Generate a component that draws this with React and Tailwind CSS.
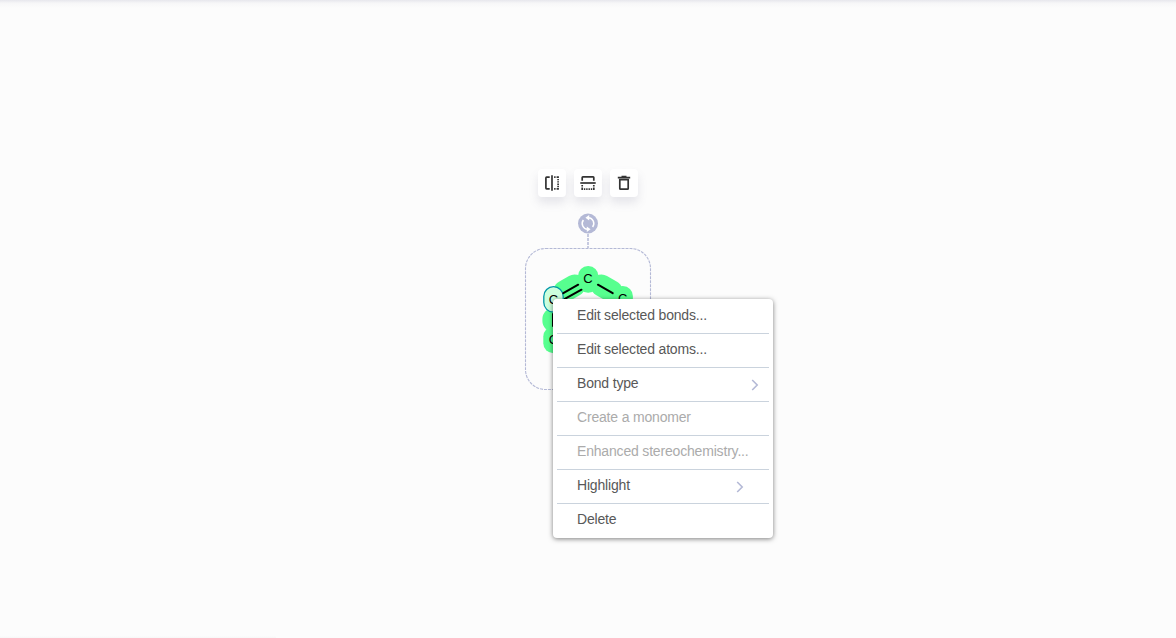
const MENU_ITEMS = [
  { label: 'Edit selected bonds...' },
  { label: 'Edit selected atoms...' },
  { label: 'Bond type', arrow: 'mr-[10px]' },
  { label: 'Create a monomer', disabled: true },
  { label: 'Enhanced stereochemistry...', disabled: true },
  { label: 'Highlight', arrow: 'mr-[25px]' },
  { label: 'Delete' },
];

function Chevron({ className }) {
  return (
    <svg className={className} width="8" height="12" viewBox="0 0 8 12" fill="none" stroke="#b4b9d6" strokeWidth="1.6">
      <path d="M1.2 1 L6.2 6 L1.2 11" />
    </svg>
  );
}

function FlipHorizontal() {
  return (
    <svg width="16" height="16" viewBox="0 0 16 16" fill="none" stroke="#333" strokeWidth="1.7">
      <path d="M5.7 2.2 H2.6 Q1.9 2.2 1.9 2.9 V13.1 Q1.9 13.8 2.6 13.8 H5.7" />
      <path d="M8 .3 V15.7" />
      <path d="M10.1 2.2 H11.6 M12.6 2.2 H14.9 M14.1 3.9 V5.3 M14.1 6.2 V7.6 M14.1 8.5 V9.9 M14.1 10.8 V12.2 M10.1 13.8 H11.6 M12.6 13.8 H14.9" />
    </svg>
  );
}

function FlipVertical() {
  return (
    <svg width="16" height="16" viewBox="0 0 16 16" fill="none" stroke="#333" strokeWidth="1.7">
      <path d="M2.2 5.7 V2.6 Q2.2 1.9 2.9 1.9 H13.1 Q13.8 1.9 13.8 2.6 V5.7" />
      <path d="M.3 8 H15.7" />
      <path d="M2.2 10.1 V11.6 M2.2 12.6 V14.9 M3.9 14.1 H5.3 M6.2 14.1 H7.6 M8.5 14.1 H9.9 M10.8 14.1 H12.2 M13.8 10.1 V11.6 M13.8 12.6 V14.9" />
    </svg>
  );
}

function Trash() {
  return (
    <svg width="16" height="16" viewBox="0 0 16 16" fill="none" stroke="#333" strokeWidth="1.7">
      <path d="M1.8 2.6 H14.2 M5.5 1.5 H10.5" />
      <path d="M3.8 4.7 H12.2 V13.5 Q12.2 14.2 11.5 14.2 H4.5 Q3.8 14.2 3.8 13.5 Z" />
    </svg>
  );
}

function ToolButton({ children }) {
  return (
    <button className="flex size-7 items-center justify-center rounded-[4px] bg-white shadow-[0_6px_10px_rgba(103,104,132,0.15)]">
      {children}
    </button>
  );
}

function Molecule() {
  return (
    <svg
      className="absolute left-0 top-0"
      width="1176"
      height="638"
      viewBox="0 0 1176 638"
      fontFamily="'Liberation Sans', Arial, sans-serif"
      fontSize="13"
      textAnchor="middle"
    >
      <g fill="none" stroke="#b4b9d6" strokeWidth="1.1">
        <rect x="525.5" y="248.5" width="125" height="141" rx="20" strokeDasharray="3 1" />
        <path d="M588 234 V248" strokeWidth="1.5" strokeDasharray="3 1" />
      </g>
      <circle cx="588" cy="223.5" r="10" fill="#b4b9d6" />
      <g fill="none" stroke="#fff" strokeWidth="1.5">
        <path d="M588.3 217.7 A5.8 5.8 0 0 1 592.6 227" />
        <path d="M587.7 229.3 A5.8 5.8 0 0 1 583.4 220" />
      </g>
      <path d="M589.2 215 V220.6 L585.4 217.8 Z M586.8 226.4 V232 L590.6 229.2 Z" fill="#fff" />

      <g stroke="#57ff8f" strokeWidth="22" strokeLinecap="round">
        <path d="M574.5 285.5 L564.5 291.3" />
        <path d="M601.5 285.5 L611.5 291.3" />
        <path d="M553.4 319 V321" />
      </g>
      <g fill="#57ff8f">
        <rect x="578" y="266" width="20.4" height="26.7" rx="10" />
        <rect x="612.5" y="286" width="20.4" height="26.7" rx="10" />
        <rect x="543.3" y="326.5" width="20.4" height="26.7" rx="10" />
      </g>
      <rect x="543.8" y="286.7" width="19.4" height="25.5" rx="9.7" fill="#ccffdd" stroke="#0097a8" strokeWidth="1.3" />
      <g stroke="#000" strokeWidth="2" strokeLinecap="round">
        <path d="M563.3 293.2 L578.2 284.7" />
        <path d="M564.8 298.8 L581.5 289.7" />
        <path d="M597.9 284.7 L612.7 293.2" />
        <path d="M553 314 V326" />
      </g>
      <g fill="#000">
        <text x="588" y="283.4">C</text>
        <text x="622.6" y="303.4">C</text>
        <text x="553.4" y="304.4">C</text>
        <text x="553.4" y="344.2">C</text>
      </g>
    </svg>
  );
}

export default function App() {
  return (
    <main className="relative h-[638px] w-[1176px] overflow-hidden bg-[#fcfcfc] font-['Liberation_Sans',Arial,sans-serif]">
      <div className="h-2 bg-linear-to-b from-[#e7e7ed] via-[#f7f7f8] via-40% to-[#fcfcfc]" />
      <div className="absolute bottom-0 left-0 h-0.5 w-[276px] bg-linear-to-b from-[#fcfcfc] to-[#f7f7f7]" />
      <Molecule />
      <div className="absolute left-[538px] top-[169px] flex gap-2">
        <ToolButton><FlipHorizontal /></ToolButton>
        <ToolButton><FlipVertical /></ToolButton>
        <ToolButton><Trash /></ToolButton>
      </div>
      <ul className="absolute left-[553px] top-[299px] h-[239px] w-[220px] rounded-[4px] bg-white px-1 pt-px text-sm leading-4 text-[#585858] shadow-[0_1px_5px_rgba(0,0,0,0.5)]">
        {MENU_ITEMS.map(({ label, disabled, arrow }) => (
          <li
            key={label}
            className={`flex h-[34px] justify-between border-b border-[#cad3dd] pt-[7px] pl-5 last:border-b-0 ${disabled ? 'text-[#ababab]' : ''}`}
          >
            <span className="whitespace-nowrap tracking-[-0.18px]">{label}</span>
            {arrow && <Chevron className={`mt-1 ${arrow}`} />}
          </li>
        ))}
      </ul>
    </main>
  );
}
